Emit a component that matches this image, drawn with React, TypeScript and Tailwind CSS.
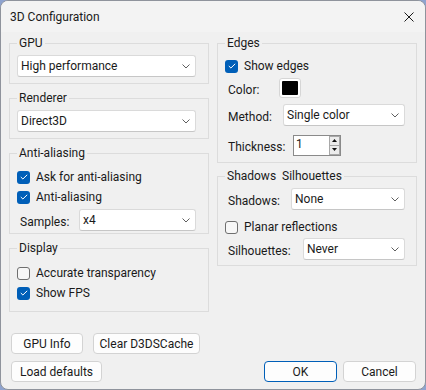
import type { ReactNode } from "react";

const Chevron = () => (
  <svg width="8" height="5" viewBox="0 0 8 5" className="shrink-0">
    <path d="M0.5 0.5 L4 4 L7.5 0.5" fill="none" stroke="#5f5f5f" strokeWidth="1" />
  </svg>
);

function Select({ value, className = "" }: { value: string; className?: string }) {
  return (
    <div
      className={`flex h-[22px] items-center justify-between rounded-[3px] border border-[#dadada] border-b-[#c6c6c6] bg-white pl-[3px] pr-[5px] ${className}`}
    >
      <span>{value}</span>
      <Chevron />
    </div>
  );
}

function Check({ checked, label }: { checked?: boolean; label: string }) {
  return (
    <div className="flex h-[20px] items-center gap-[6px]">
      {checked ? (
        <span className="flex h-[13px] w-[13px] shrink-0 items-center justify-center rounded-[3px] bg-[#005fb8]">
          <svg width="8" height="6" viewBox="0 0 8 6">
            <path d="M0.8 3 L2.9 5 L7.2 0.8" fill="none" stroke="#ffffff" strokeWidth="1" />
          </svg>
        </span>
      ) : (
        <span className="h-[13px] w-[13px] shrink-0 rounded-[3px] border border-[#6f6f6f] bg-[#f7f7f7]" />
      )}
      <span>{label}</span>
    </div>
  );
}

function Group({ title, className, children }: { title: string; className: string; children: ReactNode }) {
  return (
    <fieldset className={`border border-[#dcdcdc] pl-[7px] ${className}`}>
      <legend className="whitespace-pre px-[2px] leading-[16px]">{title}</legend>
      {children}
    </fieldset>
  );
}

function Row({ label, width, className = "", children }: { label: string; width: string; className?: string; children: ReactNode }) {
  return (
    <div className={`flex items-center ${className}`}>
      <span className={`mt-[4px] shrink-0 pl-[3px] ${width}`}>{label}</span>
      {children}
    </div>
  );
}

function Btn({ children, className = "", primary }: { children: ReactNode; className?: string; primary?: boolean }) {
  return (
    <button
      className={`h-[21px] rounded-[4px] border bg-[#fdfdfd] leading-[16px] ${primary ? "border-[#005fb8]" : "border-[#d3d3d3]"} ${className}`}
    >
      {children}
    </button>
  );
}

const Spin = () => (
  <div className="flex h-[21px] w-[48px] border border-[#8a8a8a] bg-white">
    <span className="flex-1 pl-[2px] leading-[16px]">1</span>
    <div className="flex w-[11px] flex-col">
      <span className="flex flex-1 items-center justify-center border border-[#a8a8a8] bg-[#ececec]">
        <svg width="5" height="3" viewBox="0 0 5 3">
          <path d="M0 3 L2.5 0 L5 3 Z" fill="#111" />
        </svg>
      </span>
      <span className="flex flex-1 items-center justify-center border border-t-0 border-[#a8a8a8] bg-[#ececec]">
        <svg width="5" height="3" viewBox="0 0 5 3">
          <path d="M0 0 L2.5 3 L5 0 Z" fill="#111" />
        </svg>
      </span>
    </div>
  </div>
);

export default function App() {
  return (
    <div className="h-[390px] w-[426px] bg-[#8ea3cf] font-['Roboto',sans-serif] text-[12px] text-[#1a1a1a]">
      <div className="flex h-full flex-col overflow-hidden rounded-[8px] border border-[#8f939c] bg-[#f0f0f0]">
        <div className="flex h-[31px] shrink-0 items-center justify-between bg-[#f3f3f3] pl-[9px] pr-[11px]">
          <span>3D Configuration</span>
          <svg width="10" height="10" viewBox="0 0 10 10">
            <path d="M0.5 0.5 L9.5 9.5 M9.5 0.5 L0.5 9.5" stroke="#1a1a1a" strokeWidth="1" />
          </svg>
        </div>

        <div className="grid grid-cols-2 items-start gap-[8px] px-[8px] pt-[3px]">
          <div className="flex flex-col gap-[6px]">
            <Group title="GPU" className="pr-[12px] pt-[4px] pb-[6px]">
              <Select value="High performance" />
            </Group>
            <Group title="Renderer" className="pr-[12px] pt-[4px] pb-[6px]">
              <Select value="Direct3D" />
            </Group>
            <Group title="Anti-aliasing" className="pr-[12px] pt-[6px] pb-[2px]">
              <Check checked label="Ask for anti-aliasing" />
              <Check checked label="Anti-aliasing" />
              <Row label="Samples:" width="w-[62px]" className="mt-[2px]">
                <Select value="x4" className="flex-1" />
              </Row>
            </Group>
            <Group title="Display" className="pr-[12px] pt-[7px] pb-[8px]">
              <Check label="Accurate transparency" />
              <Check checked label="Show FPS" />
            </Group>
          </div>

          <div className="flex flex-col gap-[5px]">
            <Group title="Edges" className="pr-[11px] pt-[5px] pb-[6px]">
              <Check checked label="Show edges" />
              <Row label="Color:" width="w-[54px]" className="mt-[1px] h-[22px]">
                <span className="h-[20px] w-[22px] rounded-[3px] border border-[#d6d6d6] bg-white p-[2px]">
                  <span className="block h-full w-full rounded-[1px] bg-black" />
                </span>
              </Row>
              <Row label="Method:" width="w-[58px]" className="mt-[5px]">
                <Select value="Single color" className="flex-1" />
              </Row>
              <Row label="Thickness:" width="w-[68px]" className="mt-[8px]">
                <Spin />
              </Row>
            </Group>
            <Group title="Shadows  Silhouettes" className="pr-[11px] pt-[4px] pb-[5px]">
              <Row label="Shadows:" width="w-[66px]">
                <Select value="None" className="flex-1" />
              </Row>
              <div className="mt-[7px]">
                <Check label="Planar reflections" />
              </div>
              <Row label="Silhouettes:" width="w-[78px]" className="mt-[1px]">
                <Select value="Never" className="flex-1" />
              </Row>
            </Group>
          </div>
        </div>

        <div className="mt-[21px] flex gap-[10px] pl-[10px]">
          <Btn className="w-[72px]">GPU Info</Btn>
          <Btn className="w-[107px]">Clear D3DSCache</Btn>
        </div>
        <div className="mt-[7px] flex items-center justify-between pl-[10px] pr-[9px]">
          <Btn className="w-[91px]">Load defaults</Btn>
          <div className="flex gap-[6px]">
            <Btn primary className="w-[73px]">
              OK
            </Btn>
            <Btn className="w-[73px]">Cancel</Btn>
          </div>
        </div>
      </div>
    </div>
  );
}
